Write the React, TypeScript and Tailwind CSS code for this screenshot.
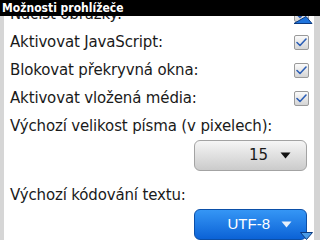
import { ReactNode } from 'react';

const font = { fontFamily: '"DejaVu Sans", sans-serif' };

function CheckBox() {
  return (
    <div className="w-[15px] h-[15px] rounded-[2px] border border-[#9a9a9a] bg-gradient-to-b from-[#fbfbfb] to-[#d4d4d4] flex items-center justify-center">
      <svg width="11" height="9" viewBox="0 0 11 9">
        <path d="M1 4.5 L4 7.5 L10 1" fill="none" stroke="#2d5fb6" strokeWidth="1.6" strokeLinecap="round" strokeLinejoin="round" />
      </svg>
    </div>
  );
}

function Row({ label, children }: { label: string; children?: ReactNode }) {
  return (
    <div className="h-[28px] flex items-center justify-between pl-[6px] pr-[5px]">
      <span className="text-[15px] text-[#1a1a1a] tracking-[-0.15px]">{label}</span>
      {children}
    </div>
  );
}

function Arrow({ color }: { color: string }) {
  return (
    <svg width="11" height="7" viewBox="0 0 11 7">
      <path d="M0.5 0.5 L10.5 0.5 L5.5 6.5 Z" fill={color} />
    </svg>
  );
}

export default function App() {
  return (
    <div className="w-[320px] h-[240px] overflow-hidden bg-white relative" style={font}>
      <div
        className="h-[16px] bg-black text-white text-[12px] font-bold leading-[16px] pl-[2px] relative z-10"
        style={{ fontFamily: '"DejaVu Sans Condensed", "DejaVu Sans", sans-serif', fontStretch: 'condensed' }}
      >
        Možnosti prohlížeče
      </div>
      <div className="flex h-[224px]">
        <div className="w-[4px] bg-[#d6d6d6]" />
        <div className="flex-1 -mt-[16px] flex flex-col">
          <Row label="Načíst obrázky:"><CheckBox /></Row>
          <Row label="Aktivovat JavaScript:"><CheckBox /></Row>
          <Row label="Blokovat překryvná okna:"><CheckBox /></Row>
          <Row label="Aktivovat vložená média:"><CheckBox /></Row>
          <Row label="Výchozí velikost písma (v pixelech):" />
          <div className="flex justify-end pr-[7px]">
            <div className="w-[113px] h-[31px] rounded-[6px] border border-[#a3a3a3] bg-gradient-to-b from-[#f6f6f6] to-[#cbcbcb] flex items-center justify-end gap-[12px] pr-[15px]">
              <span className="text-[15px] text-[#1a1a1a]">15</span>
              <Arrow color="#111" />
            </div>
          </div>
          <div className="h-[10px]" />
          <Row label="Výchozí kódování textu:" />
          <div className="flex justify-end pr-[7px]">
            <div className="w-[113px] h-[31px] rounded-[6px] border border-[#0b4fa8] bg-gradient-to-b from-[#3596f5] to-[#0b62d6] flex items-center justify-end gap-[11px] pr-[14px]">
              <span className="text-[15px] text-white" style={{ fontFamily: '"Liberation Sans", sans-serif' }}>UTF-8</span>
              <Arrow color="#e8f0fb" />
            </div>
          </div>
        </div>
        <div className="w-[6px] bg-[#d4d4d4]" />
      </div>
      <svg className="absolute left-[293px] top-[16px] z-20" width="20" height="8" viewBox="0 0 20 8">
        <path d="M1 7.5 L13 0.5 L19 7.5 Z" fill="#1f74dc" stroke="#0b3a80" strokeWidth="1" />
      </svg>
      <svg className="absolute left-[300px] top-[232px]" width="13" height="8" viewBox="0 0 13 8">
        <path d="M0.5 0.5 L12.5 0.5 L6.5 7.5 Z" fill="#4a9be6" stroke="#0b3a80" strokeWidth="1" />
      </svg>
    </div>
  );
}
